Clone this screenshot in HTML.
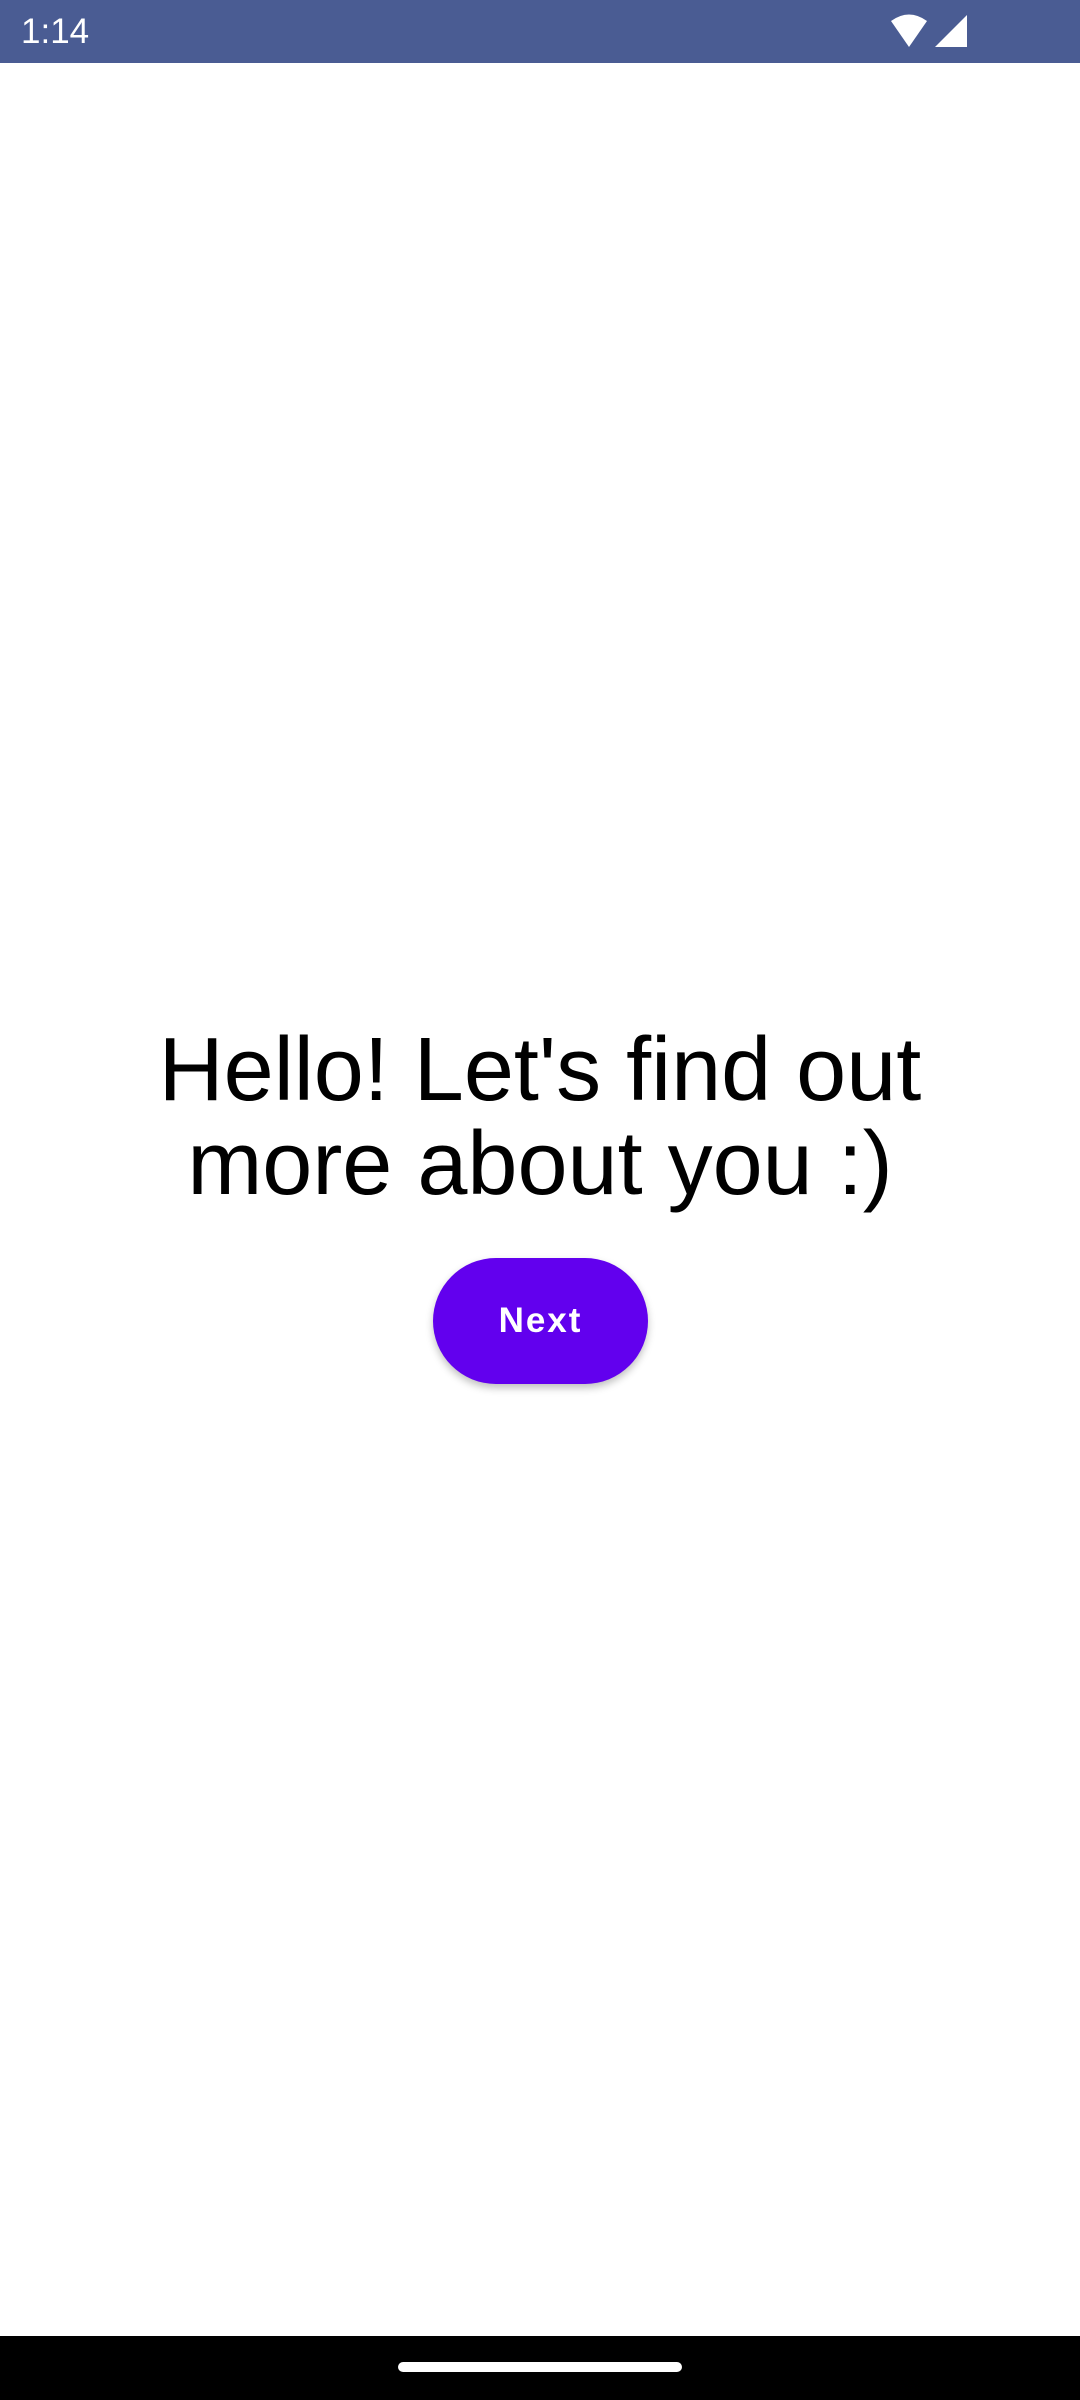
<!DOCTYPE html>
<html><head><meta charset="utf-8"><style>
html,body{margin:0;padding:0;width:1080px;height:2400px;background:#fff;overflow:hidden;font-family:"Liberation Sans",sans-serif;position:relative}
.sb{position:absolute;left:0;top:0;width:1080px;height:63px;background:#4a5c93}
.time{position:absolute;left:21px;top:12px;color:#fff;font-size:35px}
.t{position:absolute;left:0;width:1080px;top:1023px;text-align:center;font-size:90px;line-height:94px;color:#000}
.btn{position:absolute;left:433px;top:1258px;width:215px;height:126px;border-radius:63px;background:#6200ee;box-shadow:0 4px 8px rgba(0,0,0,.25);color:#fff;font-weight:bold;font-size:35px;letter-spacing:2px;text-align:center;line-height:126px}
.nav{position:absolute;left:0;top:2336px;width:1080px;height:64px;background:#000}
.pill{position:absolute;left:398px;top:2362px;width:284px;height:10px;border-radius:5px;background:#fff}
</style></head><body>
<div class="sb"><div class="time">1:14</div>
<svg style="position:absolute;left:890px;top:14px" width="80" height="34" viewBox="0 0 80 34">
<path d="M1 7 Q19 -6 37 7 L19 33 Z" fill="#fff"/>
<path d="M77 1 L77 33 L45 33 Z" fill="#fff"/>
</svg></div>
<div class="t">Hello! Let's find out<br>more about you :)</div>
<div class="btn">Next</div>
<div class="nav"></div><div class="pill"></div>
</body></html>
